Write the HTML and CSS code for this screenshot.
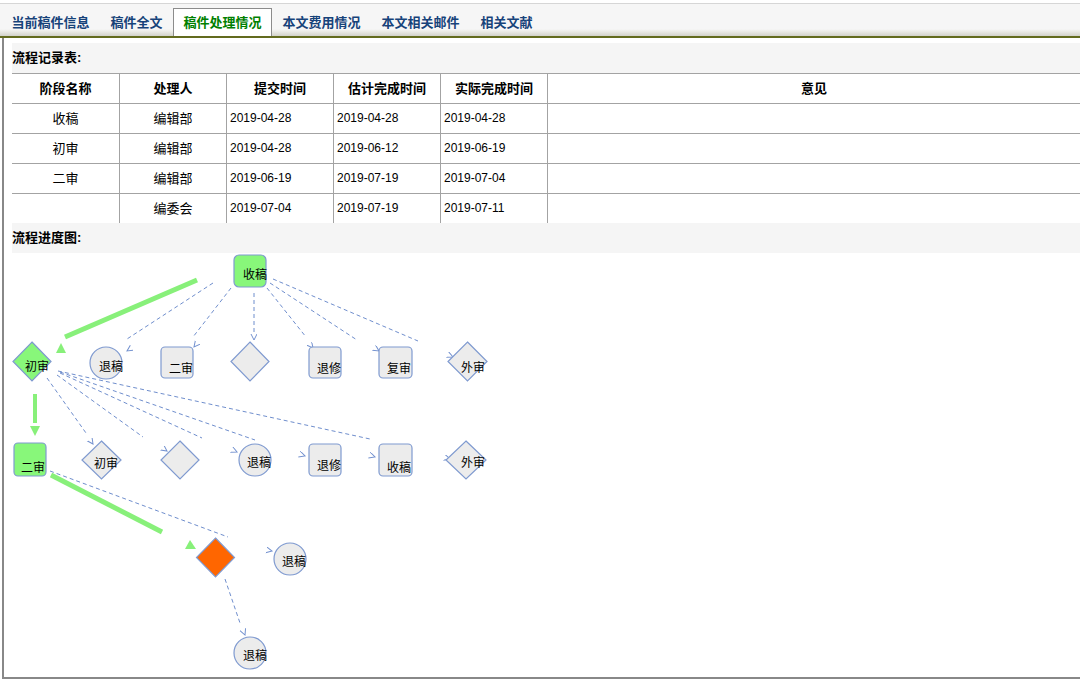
FILE: index.html
```html
<!DOCTYPE html>
<html lang="zh-CN">
<head>
    <meta charset="UTF-8">
    <title>稿件处理情况</title>
    <link rel="stylesheet" href="styles.css">
</head>
<body>
    <div class="tabbar">
        <a class="tab">当前稿件信息</a>
        <a class="tab">稿件全文</a>
        <a class="tab active">稿件处理情况</a>
        <a class="tab">本文费用情况</a>
        <a class="tab">本文相关邮件</a>
        <a class="tab">相关文献</a>
    </div>
    <div class="panel">
        <div class="section-title">流程记录表:</div>
        <table class="flow-table">
            <colgroup>
                <col class="c1"><col class="c2"><col class="c3"><col class="c4"><col class="c5"><col>
            </colgroup>
            <tr>
                <th>阶段名称</th><th>处理人</th><th>提交时间</th><th>估计完成时间</th><th>实际完成时间</th><th>意见</th>
            </tr>
            <tr>
                <td class="mid">收稿</td><td class="mid">编辑部</td><td>2019-04-28</td><td>2019-04-28</td><td>2019-04-28</td><td></td>
            </tr>
            <tr>
                <td class="mid">初审</td><td class="mid">编辑部</td><td>2019-04-28</td><td>2019-06-12</td><td>2019-06-19</td><td></td>
            </tr>
            <tr>
                <td class="mid">二审</td><td class="mid">编辑部</td><td>2019-06-19</td><td>2019-07-19</td><td>2019-07-04</td><td></td>
            </tr>
            <tr class="last">
                <td class="mid"></td><td class="mid">编委会</td><td>2019-07-04</td><td>2019-07-19</td><td>2019-07-11</td><td></td>
            </tr>
        </table>
        <div class="section-title">流程进度图:</div>

        <!-- flow chart, drawn in page coordinates -->
        <svg class="flow-chart" width="1076" height="424" viewBox="4 253 1076 424">
            <defs>
                <marker id="chev" markerWidth="8" markerHeight="8" refX="6" refY="3" orient="auto" markerUnits="userSpaceOnUse">
                    <path d="M0,0 L6,3 L0,6" fill="none" stroke="#7391cf" stroke-width="1"/>
                </marker>
            </defs>

            <!-- dashed edges -->
            <g class="edge">
                <line x1="213" y1="283" x2="127" y2="339"/>
                <line x1="231" y1="288" x2="193" y2="337"/>
                <line x1="254" y1="293" x2="254" y2="335"/>
                <line x1="267" y1="288" x2="306" y2="337"/>
                <line x1="270" y1="283" x2="357" y2="340"/>
                <line x1="273" y1="279" x2="418" y2="341"/>

                <line x1="47" y1="378" x2="86" y2="433"/>
                <line x1="57" y1="375" x2="143" y2="437"/>
                <line x1="60" y1="373" x2="202" y2="438"/>
                <line x1="60" y1="372" x2="255" y2="440"/>
                <line x1="58" y1="371" x2="370" y2="439"/>

                <line x1="50" y1="471" x2="228" y2="537"/>
                <line x1="225" y1="579" x2="240" y2="623"/>
            </g>

            <!-- arrow tips -->
            <g class="tip">
                <path d="M128.5,350 L127,351"/>
                <path d="M194.8,346 L194,347"/>
                <path d="M254,339 L254,340"/>
                <path d="M312.2,347 L313,348"/>
                <path d="M377.5,350 L379,351"/>
                <path d="M450.7,356 L453,357"/>

                <path d="M92.3,443 L93,444"/>
                <path d="M165.6,450 L167,451"/>
                <path d="M234.8,451 L237,452"/>
                <path d="M302.1,455 L305,456"/>
                <path d="M372,456 L375,457"/>
                <path d="M446.5,458 L450,459"/>

                <path d="M270,550.6 L272,551"/>
                <path d="M244.6,634 L245,635"/>
            </g>

            <!-- green path -->
            <g class="done">
                <line x1="197" y1="280" x2="65" y2="337" stroke-width="5"/>
                <polygon points="56,353 66,353 61,343"/>
                <line x1="35" y1="394" x2="35" y2="423" stroke-width="4"/>
                <polygon points="30,426 40,426 35,436"/>
                <line x1="51" y1="475" x2="162" y2="532" stroke-width="5"/>
                <polygon points="185,549 196,549 190,540"/>
            </g>

            <!-- nodes -->
            <g class="node">
                <rect class="green" x="234" y="255" width="32" height="32" rx="5"/>

                <polygon class="green" points="32,342 51,361.5 32,381 13,361.5"/>
                <circle cx="106" cy="363" r="16"/>
                <rect x="161" y="347" width="32" height="31" rx="4"/>
                <polygon points="250,342 269,361.5 250,381 231,361.5"/>
                <rect x="309" y="347" width="32" height="31" rx="4"/>
                <rect x="379" y="347" width="33" height="31" rx="4"/>
                <polygon points="467.5,342 487,361.5 467.5,381 448,361.5"/>

                <rect class="green" x="14" y="443" width="32" height="33" rx="4"/>
                <polygon points="101.5,441 121,460 101.5,479 82,460"/>
                <polygon points="180,441 199,460 180,479 161,460"/>
                <circle cx="255" cy="460" r="16"/>
                <rect x="309" y="444" width="32" height="32" rx="4"/>
                <rect x="379" y="444" width="33" height="32" rx="4"/>
                <polygon points="466,441 486,460 466,479 446,460"/>

                <polygon class="current" points="215.5,538 234.5,557.5 215.5,577 196.5,557.5"/>
                <circle cx="290" cy="559" r="16"/>
                <circle cx="250" cy="653" r="16"/>
            </g>

            <!-- labels -->
            <g class="label">
                <text x="243" y="278.5">收稿</text>

                <text x="25" y="370.5">初审</text>
                <text x="99" y="370.5">退稿</text>
                <text x="169" y="372.5">二审</text>
                <text x="317" y="372.5">退修</text>
                <text x="387" y="372.5">复审</text>
                <text x="461" y="371.5">外审</text>

                <text x="21" y="471.5">二审</text>
                <text x="94" y="467.5">初审</text>
                <text x="247" y="466.5">退稿</text>
                <text x="317" y="469.5">退修</text>
                <text x="387" y="471.5">收稿</text>
                <text x="461" y="466.5">外审</text>

                <text x="282" y="565.5">退稿</text>
                <text x="243" y="659.5">退稿</text>
            </g>
        </svg>
    </div>
</body>
</html>
```

FILE: styles.css
```css
body {
    margin: 0;
    font-family: "Liberation Sans", "Noto Sans CJK SC", sans-serif;
    font-size: 13px;
    color: #000;
    background: #fff;
}
.tabbar {
    display: flex;
    align-items: flex-end;
    margin-top: 3px;
    padding-left: 1px;
    height: 32px;
    border-top: 1px solid #d6d6d6;
    border-bottom: 2px solid #636b1e;
    background: linear-gradient(to bottom, #f6f6f6 0, #f6f6f6 78%, #ebebe6 86%, #d2d2ca 100%);
}
.tab {
    height: 27px;
    line-height: 27px;
    padding: 0 9.5px;
    border: 1px solid transparent;
    border-bottom: none;
    font-weight: bold;
    color: #17437a;
    cursor: pointer;
    white-space: nowrap;
}
.tab.active {
    background: #fff;
    border-color: #8c8c8c;
    color: #008000;
}
.panel {
    margin-left: 2px;
    padding-top: 5px;
    border-left: 2px solid #888;
    border-bottom: 2px solid #888;
}
.section-title {
    margin-left: 8px;
    height: 30px;
    line-height: 30px;
    background: #f5f5f5;
    font-weight: bold;
}
.flow-table {
    margin-left: 8px;
    width: calc(100% - 8px);
    table-layout: fixed;
    border-collapse: separate;
    border-spacing: 0;
}
.flow-table .c1 {
    width: 107px;
}
.flow-table .c2,
.flow-table .c3,
.flow-table .c4,
.flow-table .c5 {
    width: 107px;
}
.flow-table th,
.flow-table td {
    height: 29px;
    padding: 0 0 0 3px;
    line-height: 29px;
    border-top: 1px solid #a3a3a3;
    border-left: 1px solid #a3a3a3;
    text-align: left;
    font-size: 12px;
    white-space: nowrap;
}
.flow-table th {
    text-align: center;
    font-size: 13px;
    padding: 0;
}
.flow-table th:first-child,
.flow-table td:first-child {
    border-left: none;
}
.flow-table td.mid {
    text-align: center;
    font-size: 13px;
    padding: 0;
}
.flow-chart {
    display: block;
    margin-left: 0;
}
.edge line {
    stroke: #6f8ecd;
    stroke-width: 1;
    stroke-dasharray: 4 3;
}
.tip path {
    fill: none;
    stroke: none;
    marker-end: url(#chev);
}
.done line {
    stroke: #88f07a;
}
.done polygon {
    fill: #88f07a;
}
.node rect,
.node circle,
.node polygon {
    fill: #ececec;
    stroke: #7f9ad0;
    stroke-width: 1.2;
}
.node .green {
    fill: #88f77a;
}
.node .current {
    fill: #ff6600;
}
.label text {
    font-family: "Noto Sans CJK SC", sans-serif;
    font-size: 12px;
    fill: #000;
}
```
